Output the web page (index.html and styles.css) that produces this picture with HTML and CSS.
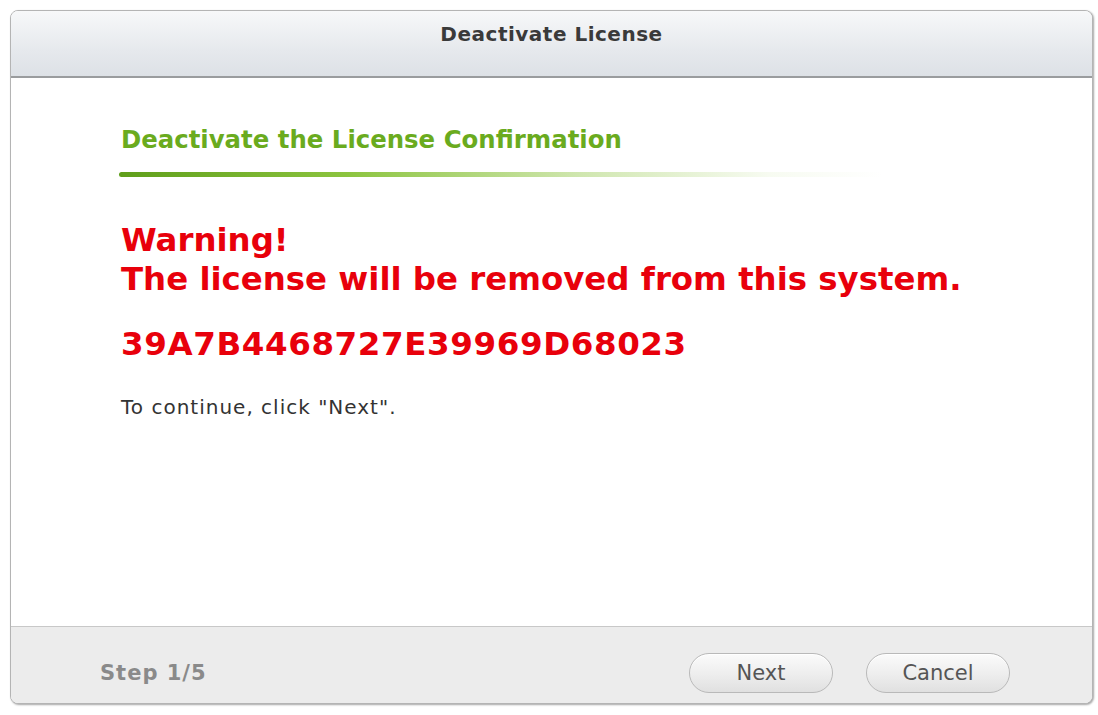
FILE: index.html
```html
<!DOCTYPE html>
<html>
<head>
<meta charset="utf-8">
<link rel="stylesheet" href="styles.css">
</head>
<body>
<div class="dialog">
  <div class="header">Deactivate License</div>
  <div class="content">
    <h2 class="section-title">Deactivate the License Confirmation</h2>
    <div class="green-rule"></div>
    <p class="warning">Warning!<br>The license will be removed from this system.</p>
    <p class="key">39A7B4468727E39969D68023</p>
    <p class="hint">To continue, click "Next".</p>
  </div>
  <div class="footer">
    <span class="step">Step 1/5</span>
    <div class="buttons">
      <button class="btn">Next</button>
      <button class="btn">Cancel</button>
    </div>
  </div>
</div>
</body>
</html>
```
FILE: styles.css
```css
html, body {
  margin: 0;
  padding: 0;
  background: #ffffff;
}
body {
  font-family: "DejaVu Sans", Verdana, sans-serif;
  padding: 10px 0 0 10px;
  height: 715px;
  box-sizing: border-box;
  overflow: hidden;
}
.dialog {
  width: 1083px;
  height: 694px;
  box-sizing: border-box;
  border: 1px solid #b4b4b4;
  border-radius: 8px;
  box-shadow: 1px 1px 2px rgba(0,0,0,0.35);
  display: flex;
  flex-direction: column;
  overflow: hidden;
  background: #fff;
}
.header {
  height: 67px;
  flex: 0 0 auto;
  box-sizing: border-box;
  border-bottom: 2px solid #9a9c9e;
  background: linear-gradient(#f7f8f9, #e6e9ed 60%, #dde1e6);
  display: flex;
  align-items: center;
  justify-content: center;
  font-weight: bold;
  font-size: 20px;
  letter-spacing: 0.5px;
  color: #3a3a3a;
  padding-bottom: 20px;
}
.content {
  flex: 1 1 auto;
  padding: 47px 40px 0 110px;
  background: #fff;
}
.section-title {
  margin: 0;
  font-weight: bold;
  font-size: 24.4px;
  color: #6aab1e;
  line-height: 30px;
}
.green-rule {
  margin-top: 17px;
  width: 764px;
  margin-left: -2px;
  height: 5px;
  border-radius: 3px;
  background: linear-gradient(to right, #5f9e1a, #8cc43f 30%, #cfe6ae 60%, rgba(235,245,220,0.4) 85%, rgba(255,255,255,0));
}
.warning {
  margin: 44px 0 0 0;
  font-weight: bold;
  font-size: 32.4px;
  line-height: 39px;
  color: #e8000b;
}
.key {
  margin: 25px 0 0 0;
  font-weight: bold;
  font-size: 32.5px;
  line-height: 40px;
  color: #e8000b;
  letter-spacing: 0.6px;
}
.hint {
  margin: 31px 0 0 0;
  font-size: 20px;
  letter-spacing: 1px;
  color: #333;
  line-height: 24px;
}
.footer {
  flex: 0 0 77px;
  box-sizing: border-box;
  border-top: 1px solid #c8c8c8;
  background: #ececec;
  display: flex;
  align-items: center;
  justify-content: space-between;
  padding: 16px 82px 0 89px;
}
.step {
  font-weight: bold;
  font-size: 21px;
  letter-spacing: 1px;
  color: #8a8a8a;
}
.buttons {
  display: flex;
  gap: 33px;
}
.btn {
  width: 144px;
  height: 40px;
  border-radius: 20px;
  border: 1px solid #b9b9b9;
  background: linear-gradient(#fbfbfb, #ededed 55%, #e0e0e0);
  box-shadow: inset 0 1px 0 #fff;
  font-family: "DejaVu Sans", sans-serif;
  font-size: 21px;
  color: #555;
  padding: 0;
}
```
